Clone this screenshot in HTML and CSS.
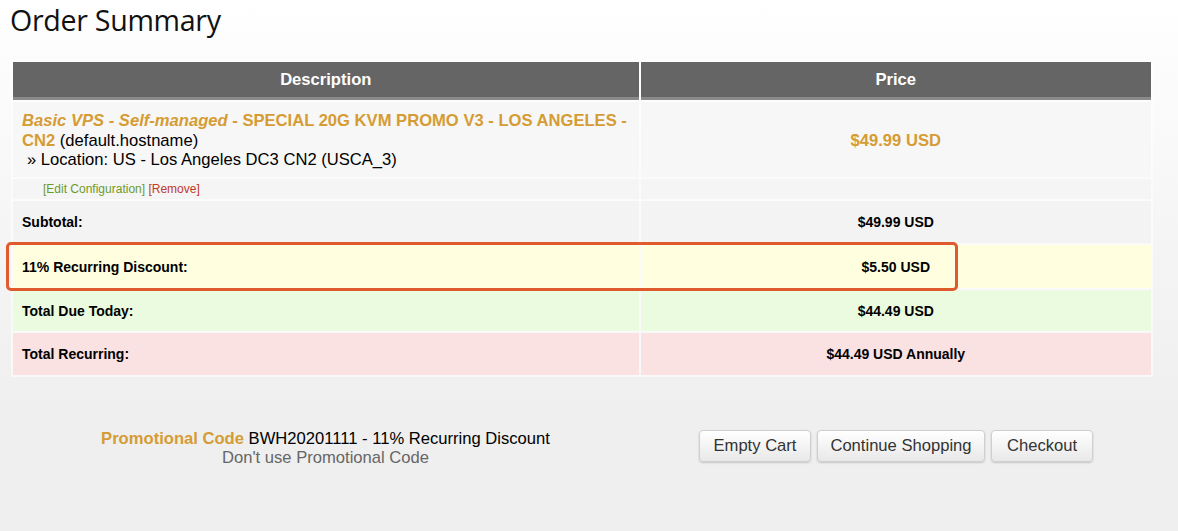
FILE: index.html
```html
<!DOCTYPE html>
<html lang="en">
<head>
<meta charset="utf-8">
<title>Order Summary</title>
<link rel="stylesheet" href="styles.css">
</head>
<body>
<h1 class="page-title">Order Summary</h1>

<div class="cart-wrap">
  <table class="cart">
    <thead>
      <tr>
        <th class="col-desc">Description</th>
        <th class="col-price">Price</th>
      </tr>
    </thead>
    <tbody>
      <tr class="row-item">
        <td class="desc">
          <span class="product"><em>Basic VPS - Self-managed</em> - SPECIAL 20G KVM PROMO V3 - LOS ANGELES - CN2</span> (default.hostname)<br>
          <span class="config">» Location: US - Los Angeles DC3 CN2 (USCA_3)</span>
        </td>
        <td class="price price-item">$49.99 USD</td>
      </tr>
      <tr class="row-actions">
        <td class="actions"><a class="edit" href="#">[Edit Configuration]</a> <a class="remove" href="#">[Remove]</a></td>
        <td class="actions-empty"></td>
      </tr>
      <tr class="row-sum row-subtotal">
        <td class="label">Subtotal:</td>
        <td class="amount">$49.99 USD</td>
      </tr>
      <tr class="row-sum row-discount">
        <td class="label">11% Recurring Discount:</td>
        <td class="amount">$5.50 USD</td>
      </tr>
      <tr class="row-sum row-due">
        <td class="label">Total Due Today:</td>
        <td class="amount">$44.49 USD</td>
      </tr>
      <tr class="row-sum row-recurring">
        <td class="label">Total Recurring:</td>
        <td class="amount">$44.49 USD Annually</td>
      </tr>
    </tbody>
  </table>
  <div class="highlight"></div>
</div>

<div class="cart-footer">
  <div class="promo">
    <div><span class="promo-label">Promotional Code</span> BWH20201111 - 11% Recurring Discount</div>
    <a class="promo-remove" href="#">Don't use Promotional Code</a>
  </div>
  <div class="buttons">
    <button class="btn btn-empty" type="button">Empty Cart</button>
    <button class="btn btn-continue" type="button">Continue Shopping</button>
    <button class="btn btn-checkout" type="button">Checkout</button>
  </div>
</div>
</body>
</html>
```

FILE: styles.css
```css
html, body {
  margin: 0;
  padding: 0;
}
body {
  width: 1178px;
  height: 531px;
  overflow: hidden;
  font-family: "Liberation Sans", Arial, sans-serif;
  color: #000;
  background: linear-gradient(#ffffff 0px, #f4f4f4 260px, #efefef 420px, #efefef 531px);
}
a { text-decoration: none; }

.page-title {
  margin: 0;
  padding: 0 0 0 10px;
  height: 60px;
  font-family: "Open Sans", "Liberation Sans", sans-serif;
  font-weight: 400;
  font-size: 28.6px;
  line-height: 40px;
  color: #111;
  letter-spacing: -0.3px;
}

.cart-wrap {
  position: relative;
  width: 1144px;
  margin-left: 11px;
}
.cart {
  width: 1142px;
  border-collapse: separate;
  border-spacing: 2px;
  background: rgba(255,255,255,0.55);
  table-layout: fixed;
}
.cart th {
  background: #656565;
  color: #fff;
  font-size: 16.6px;
  font-weight: bold;
  height: 35px;
  padding: 0;
  border-bottom: 3px solid #8a8a8a;
  text-align: center;
}
.col-desc { width: 625px; }
.col-price { width: 510px; }

.cart td { padding: 0; }

.row-item td { background: #f7f7f7; height: 73px; }
.desc {
  padding: 2px 0 0 9px !important;
  font-size: 16.6px;
  line-height: 19.5px;
  vertical-align: middle;
}
.product {
  color: #d59c34;
  font-weight: bold;
}
.config { padding-left: 5px; }
.price-item {
  text-align: center;
  color: #d59c34;
  font-weight: bold;
  font-size: 16.6px;
  padding-top: 2px !important;
}

.row-actions td { background: #f5f5f5; height: 20px; }
.actions {
  font-size: 12px;
  padding-left: 30px !important;
}
.edit { color: #6e9a2b; }
.remove { color: #c0392b; }

.row-sum td {
  height: 42px;
  font-size: 14px;
  font-weight: bold;
}
.row-sum .label { padding-left: 9px; }
.row-sum .amount { text-align: center; }
.row-subtotal td { background: #f3f3f3; }
.row-discount td { background: #ffffe0; height: 43px; }
.row-due td { background: #ebfbdf; height: 41px; }
.row-recurring td { background: #fae1e2; }

.highlight {
  position: absolute;
  left: -5px;
  top: 182px;
  width: 946px;
  height: 43px;
  border: 3px solid #df5a2c;
  border-radius: 5px;
  pointer-events: none;
}

.cart-footer {
  display: flex;
  align-items: center;
  margin: 52px 0 0 13px;
  width: 1138px;
}
.promo {
  width: 625px;
  text-align: center;
  font-size: 16.6px;
  line-height: 19px;
  margin-right: 3px;
}
.promo-label {
  color: #d59c34;
  font-weight: bold;
}
.promo-remove { color: #666; }
.buttons {
  width: 510px;
  display: flex;
  justify-content: center;
  gap: 6px;
  margin-top: -4px;
}
.btn {
  height: 32px;
  padding: 0;
  font-family: "Liberation Sans", Arial, sans-serif;
  font-size: 16.6px;
  color: #333;
  background: linear-gradient(#ffffff, #e8e8e8);
  border: 1px solid #cfcfcf;
  border-radius: 4px;
  box-shadow: 0 1px 2px rgba(0,0,0,0.18);
}
.btn-empty { width: 112px; }
.btn-continue { width: 168px; }
.btn-checkout { width: 102px; }
```
